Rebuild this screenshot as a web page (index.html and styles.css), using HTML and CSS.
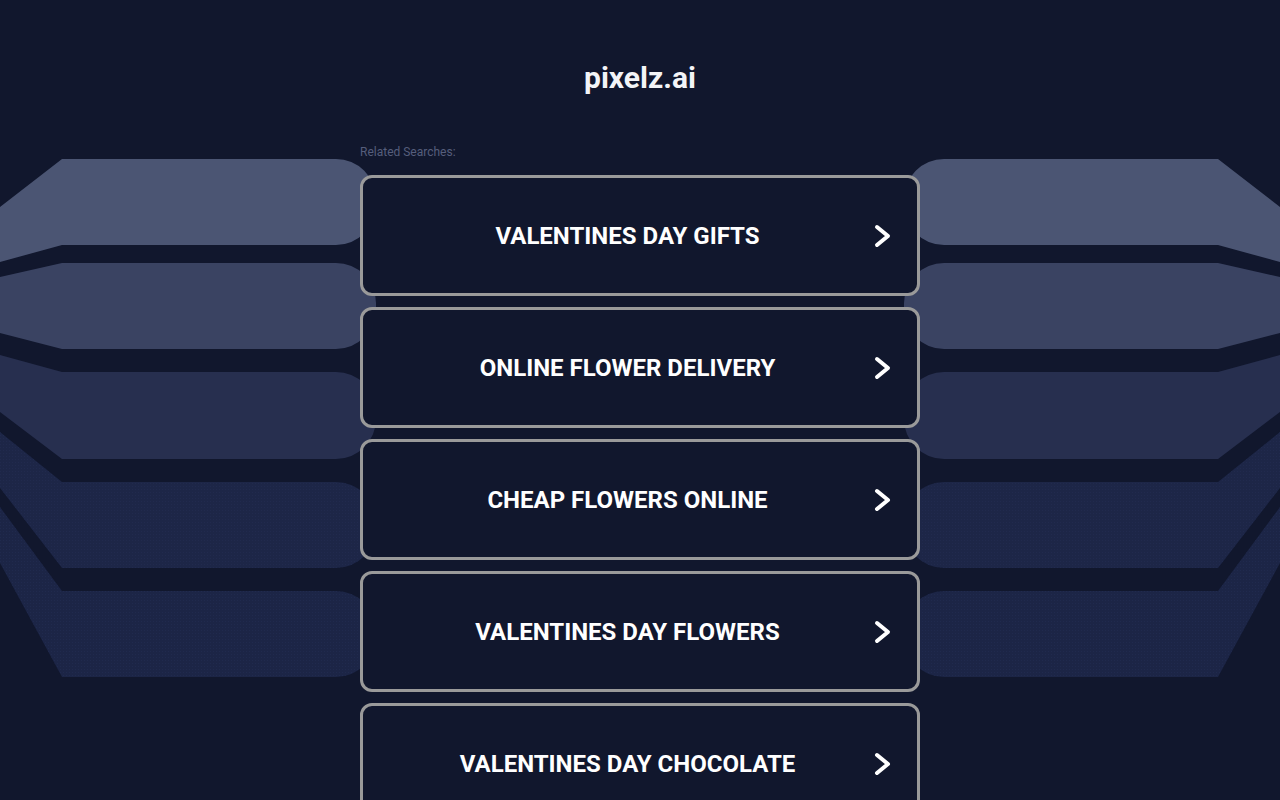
FILE: index.html
```html
<!DOCTYPE html>
<html lang="en">
<head>
<meta charset="utf-8">
<title>pixelz.ai</title>
<link rel="stylesheet" href="styles.css">
</head>
<body>
<svg class="deco deco-left" width="380" height="800" viewBox="0 0 380 800" aria-hidden="true">
  <defs>
    <pattern id="dotsL" width="3" height="3" patternUnits="userSpaceOnUse">
      <rect width="1" height="1" fill="#2a3560"/>
    </pattern>
  </defs>
  <path class="s1" d="M0,207 L62,159 L336,159 A40,40 0 0 1 376,199 L376,205 A40,40 0 0 1 336,245 L62,245 L0,262 Z"/>
  <path class="s2" d="M0,277 L62,263 L336,263 A40,40 0 0 1 376,303 L376,309 A40,40 0 0 1 336,349 L62,349 L0,333 Z"/>
  <path class="s3" d="M0,355 L62,372 L336,372 A40,40 0 0 1 376,412 L376,419 A40,40 0 0 1 336,459 L62,459 L0,412 Z"/>
  <path class="s4" d="M0,432 L62,482 L336,482 A40,40 0 0 1 376,522 L376,528 A40,40 0 0 1 336,568 L62,568 L0,488 Z"/>
  <path class="dots" fill="url(#dotsL)" d="M0,432 L62,482 L336,482 A40,40 0 0 1 376,522 L376,528 A40,40 0 0 1 336,568 L62,568 L0,488 Z"/>
  <path class="s5" d="M0,507 L62,591 L336,591 A40,40 0 0 1 376,631 L376,637 A40,40 0 0 1 336,677 L62,677 L0,563 Z"/>
  <path class="dots" fill="url(#dotsL)" d="M0,507 L62,591 L336,591 A40,40 0 0 1 376,631 L376,637 A40,40 0 0 1 336,677 L62,677 L0,563 Z"/>
</svg>
<svg class="deco deco-right" width="380" height="800" viewBox="0 0 380 800" aria-hidden="true">
  <defs>
    <pattern id="dotsR" width="3" height="3" patternUnits="userSpaceOnUse">
      <rect width="1" height="1" fill="#2a3560"/>
    </pattern>
  </defs>
  <path class="s1" d="M0,207 L62,159 L336,159 A40,40 0 0 1 376,199 L376,205 A40,40 0 0 1 336,245 L62,245 L0,262 Z"/>
  <path class="s2" d="M0,277 L62,263 L336,263 A40,40 0 0 1 376,303 L376,309 A40,40 0 0 1 336,349 L62,349 L0,333 Z"/>
  <path class="s3" d="M0,355 L62,372 L336,372 A40,40 0 0 1 376,412 L376,419 A40,40 0 0 1 336,459 L62,459 L0,412 Z"/>
  <path class="s4" d="M0,432 L62,482 L336,482 A40,40 0 0 1 376,522 L376,528 A40,40 0 0 1 336,568 L62,568 L0,488 Z"/>
  <path class="dots" fill="url(#dotsR)" d="M0,432 L62,482 L336,482 A40,40 0 0 1 376,522 L376,528 A40,40 0 0 1 336,568 L62,568 L0,488 Z"/>
  <path class="s5" d="M0,507 L62,591 L336,591 A40,40 0 0 1 376,631 L376,637 A40,40 0 0 1 336,677 L62,677 L0,563 Z"/>
  <path class="dots" fill="url(#dotsR)" d="M0,507 L62,591 L336,591 A40,40 0 0 1 376,631 L376,637 A40,40 0 0 1 336,677 L62,677 L0,563 Z"/>
</svg>

<header class="header">
  <h1 class="title">pixelz.ai</h1>
</header>

<main class="content">
  <p class="related">Related Searches:</p>
  <nav class="links">
    <a class="link" href="#"><span class="link-text">VALENTINES DAY GIFTS</span><svg class="chev" width="17" height="24" viewBox="0 0 17 24"><path d="M3,3 L14,12 L3,21"/></svg></a>
    <a class="link" href="#"><span class="link-text">ONLINE FLOWER DELIVERY</span><svg class="chev" width="17" height="24" viewBox="0 0 17 24"><path d="M3,3 L14,12 L3,21"/></svg></a>
    <a class="link" href="#"><span class="link-text">CHEAP FLOWERS ONLINE</span><svg class="chev" width="17" height="24" viewBox="0 0 17 24"><path d="M3,3 L14,12 L3,21"/></svg></a>
    <a class="link" href="#"><span class="link-text">VALENTINES DAY FLOWERS</span><svg class="chev" width="17" height="24" viewBox="0 0 17 24"><path d="M3,3 L14,12 L3,21"/></svg></a>
    <a class="link" href="#"><span class="link-text">VALENTINES DAY CHOCOLATE</span><svg class="chev" width="17" height="24" viewBox="0 0 17 24"><path d="M3,3 L14,12 L3,21"/></svg></a>
  </nav>
</main>
</body>
</html>
```

FILE: styles.css
```css
html, body {
  margin: 0;
  padding: 0;
}

body {
  background: #11172d;
  font-family: Roboto, "Liberation Sans", Arial, sans-serif;
  color: #ffffff;
  height: 800px;
  overflow: hidden;
  position: relative;
}

.deco {
  position: absolute;
  top: 0;
  z-index: 0;
}

.deco-left {
  left: 0;
}

.deco-right {
  right: 0;
  transform: scaleX(-1);
}

.s1 { fill: #4b5573; }
.s2 { fill: #3a4362; }
.s3 { fill: #272f4f; }
.s4 { fill: #1d2647; }
.s5 { fill: #1c2546; }
.dots { opacity: 0.3; }

.header {
  position: relative;
  z-index: 1;
  padding-top: 60px;
  text-align: center;
}

.title {
  margin: 0;
  font-size: 30px;
  line-height: 36px;
  font-weight: 700;
  color: #f3f4f7;
}

.content {
  position: relative;
  z-index: 1;
  width: 560px;
  margin: 0 auto;
}

.related {
  margin: 49px 0 16px;
  font-size: 12px;
  line-height: 14px;
  color: #565e7c;
}

.links {
  display: flex;
  flex-direction: column;
  gap: 11px;
}

.link {
  display: flex;
  align-items: center;
  box-sizing: border-box;
  height: 121px;
  padding: 0 26px 0 18px;
  border: 3px solid #9a9a9a;
  border-radius: 12px;
  background: #11172d;
  text-decoration: none;
  color: #ffffff;
}

.link-text {
  flex: 1;
  text-align: center;
  font-size: 24px;
  font-weight: 700;
}

.chev {
  flex: none;
  display: block;
}

.chev path {
  fill: none;
  stroke: #ffffff;
  stroke-width: 4;
  stroke-linecap: round;
  stroke-linejoin: round;
}
```
